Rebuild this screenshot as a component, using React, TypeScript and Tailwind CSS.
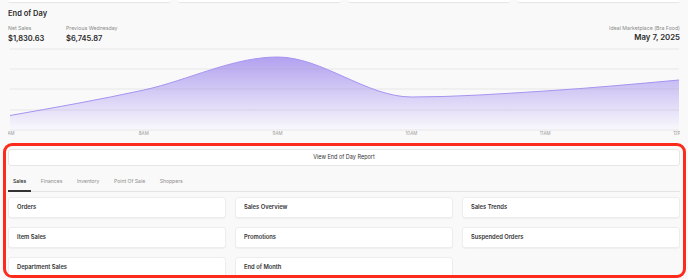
import React from "react";

const topCards = [0, 1, 2, 3];
const hours = ["7AM", "8AM", "9AM", "10AM", "11AM", "12PM"];
const sales = [70.5, 45, 12, 52, 46, 35];
const tabs = ["Sales", "Finances", "Inventory", "Point Of Sale", "Shoppers"];
const reports = ["Orders", "Sales Overview", "Sales Trends", "Item Sales", "Promotions", "Suspended Orders", "Department Sales", "End of Month"];

// monotone cubic, same idea as d3.curveMonotoneX
const monotonePath = (xs: number[], ys: number[]) => {
  const n = xs.length;
  const s: number[] = [];
  for (let i = 0; i < n - 1; i++) s.push((ys[i + 1] - ys[i]) / (xs[i + 1] - xs[i]));
  const t: number[] = new Array(n).fill(0);
  for (let i = 1; i < n - 1; i++) {
    const h0 = xs[i] - xs[i - 1];
    const h1 = xs[i + 1] - xs[i];
    const p = (s[i - 1] * h1 + s[i] * h0) / (h0 + h1);
    t[i] = (Math.sign(s[i - 1]) + Math.sign(s[i])) * Math.min(Math.abs(s[i - 1]), Math.abs(s[i]), 0.5 * Math.abs(p)) || 0;
  }
  t[0] = (3 * s[0] - t[1]) / 2;
  t[n - 1] = (3 * s[n - 2] - t[n - 2]) / 2;
  let d = `M${xs[0]},${ys[0]}`;
  for (let i = 0; i < n - 1; i++) {
    const h = (xs[i + 1] - xs[i]) / 3;
    d += ` C${xs[i] + h},${ys[i] + t[i] * h} ${xs[i + 1] - h},${ys[i + 1] - t[i + 1] * h} ${xs[i + 1]},${ys[i + 1]}`;
  }
  return d;
};

const SalesChart = () => {
  const xs = hours.map((_, i) => 2 + i * 133.8);
  const line = monotonePath(xs, sales);
  const area = `${line} L${xs[xs.length - 1]},85 L${xs[0]},85 Z`;
  return (
    <div className="mx-[8px] h-[95px] overflow-hidden">
      <svg className="block" width="672" height="95" viewBox="0 0 672 95">
        <defs>
          <linearGradient id="fillSales" x1="0" y1="12" x2="0" y2="85" gradientUnits="userSpaceOnUse">
            <stop offset="0" stopColor="#b2a1ef" />
            <stop offset="0.55" stopColor="#d9d1f6" />
            <stop offset="1" stopColor="#f9f8fc" />
          </linearGradient>
        </defs>
        <path d={area} fill="url(#fillSales)" />
        {[4, 24, 44, 65, 85].map((y) => (
          <line key={y} x1="2" x2="671" y1={y} y2={y} stroke="#9a9a9a" strokeOpacity="0.22" strokeWidth="0.8" />
        ))}
        <path d={line} fill="none" stroke="#a793f2" strokeWidth="1" />
        {hours.map((h, i) => (
          <text key={h} x={xs[i]} y="89.5" textAnchor="middle" fontSize="4.5" fill="#9a9a9a" fontFamily="Inter, sans-serif">{h}</text>
        ))}
      </svg>
    </div>
  );
};

export default function App() {
  return (
    <div className="w-full h-[279px] overflow-hidden bg-[#f9f9f9] text-[#2b2b2b]" style={{ fontFamily: "Inter, 'Noto Sans', sans-serif" }}>
      <div className="grid grid-cols-4 gap-[7px] px-[8px]">
        {topCards.map((c) => <div key={c} className="h-[2px] bg-white rounded-b-[3px] shadow-[0_1px_1px_rgba(0,0,0,0.08)]" />)}
      </div>

      <div className="h-[22px] flex items-center px-[8px] pt-[1px]">
        <h2 className="text-[7.5px] font-semibold leading-none">End of Day</h2>
      </div>

      <div className="h-[21px] flex justify-between px-[8px]">
        <div className="flex">
          <div className="w-[58px]">
            <p className="text-[5.2px] leading-[8px] text-[#8a8a8a]">Net Sales</p>
            <p className="text-[7.5px] leading-[13px] font-semibold">$1,830.63</p>
          </div>
          <div>
            <p className="text-[5.2px] leading-[8px] text-[#8a8a8a]">Previous Wednesday</p>
            <p className="text-[7.5px] leading-[13px] font-semibold">$6,745.87</p>
          </div>
        </div>
        <div className="text-right">
          <p className="text-[5.2px] leading-[8px] text-[#8a8a8a]">Ideal Marketplace (Bra Food)</p>
          <p className="text-[7.8px] leading-[10px] font-semibold">May 7, 2025</p>
        </div>
      </div>

      <SalesChart />

      <div className="mt-[3px] ml-[3px] mr-[2px] h-[135px] border-[3px] border-[#fd2b1c] rounded-[9px] overflow-hidden">
        <div className="ml-[2px] mr-[3px] pt-[3px]">
          <button className="block w-full h-[17px] bg-white border border-[#e6e6e6] rounded-[3px] text-[5.5px] leading-none text-[#333]">
            View End of Day Report
          </button>

          <div className="h-[26px] flex items-end gap-[4.5px] border-b border-[#e4e4e4]">
            {tabs.map((t, i) => (
              <div key={t} className={`h-[18px] -mb-px px-[5px] flex items-center text-[5.1px] border-b-2 ${i === 0 ? "border-[#333] text-[#222] font-medium" : "border-transparent text-[#8f8f8f]"}`}>
                {t}
              </div>
            ))}
          </div>

          <div className="mt-[5px] grid grid-cols-3 gap-x-[9px] gap-y-[9px]">
            {reports.map((r) => (
              <div key={r} className="h-[21px] bg-white border border-[#ededed] rounded-[3px] shadow-[0_1px_1px_rgba(0,0,0,0.04)] flex items-center pl-[8px] text-[5.8px] font-semibold text-[#333]">
                {r}
              </div>
            ))}
          </div>
        </div>
      </div>
    </div>
  );
}
